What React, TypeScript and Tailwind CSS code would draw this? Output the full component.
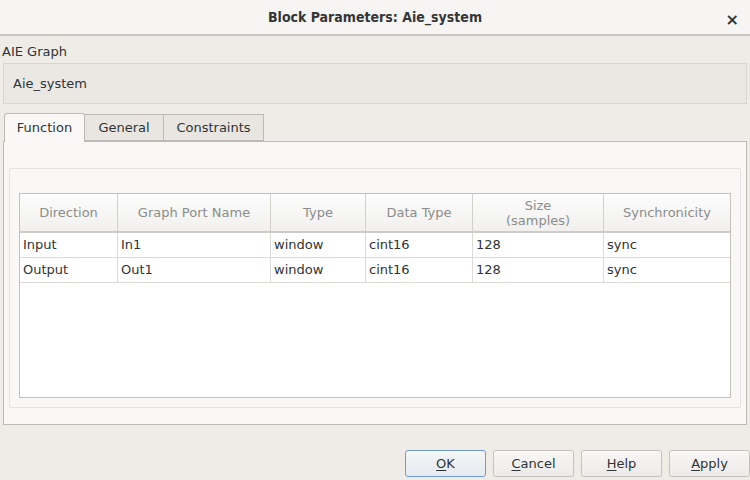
const cols = [
  { label: "Direction", w: "w-[98px]" },
  { label: "Graph Port Name", w: "w-[153px]" },
  { label: "Type", w: "w-[95px]" },
  { label: "Data Type", w: "w-[107px]" },
  { label: "Size\n(samples)", w: "w-[131px]" },
  { label: "Synchronicity", w: "flex-1" },
];

const rows = [
  ["Input", "In1", "window", "cint16", "128", "sync"],
  ["Output", "Out1", "window", "cint16", "128", "sync"],
];

function Btn({ k, rest, primary }: { k: string; rest: string; primary?: boolean }) {
  return (
    <button
      className={
        "w-[81px] h-[27px] rounded-[3px] border text-[13px] text-[#2e3436] " +
        (primary
          ? "border-[#6f9bd0] bg-gradient-to-b from-[#f4f6f8] to-[#e6eaee]"
          : "border-[#c6c2bd] bg-gradient-to-b from-[#f8f7f6] to-[#edebe8]")
      }
    >
      <span className="underline underline-offset-2">{k}</span>
      {rest}
    </button>
  );
}

export default function App() {
  return (
    <div className="w-[750px] h-[480px] bg-[#efece8] overflow-hidden flex flex-col font-['DejaVu_Sans',sans-serif] text-[13px] text-[#2e3436]">
      <div className="h-[36px] shrink-0 bg-[#f6f5f4] border-b-2 border-[#c9c6c2] flex items-center relative">
        <div className="flex-1 text-center font-['DejaVu_Sans_Condensed','DejaVu_Sans',sans-serif] font-bold text-[14px] text-[#353535]">
          Block Parameters: Aie_system
        </div>
        <span className="absolute right-[11px] top-[8px] text-[16px] font-bold">×</span>
      </div>

      <div className="px-[2px] pt-[8px] leading-[16px]">AIE Graph</div>
      <div className="mx-[3px] mt-[3px] h-[41px] shrink-0 border border-[#d9d5d0] bg-[#ebe8e4] flex items-center px-[9px]">
        Aie_system
      </div>

      <div className="mt-[8px] mx-[3px] flex flex-col">
        <div className="flex pl-[1px] h-[29px] items-end">
          <div className="h-[29px] w-[81px] border border-b-0 border-[#bdb9b4] bg-[#faf8f6] rounded-t-[3px] flex items-center justify-center relative top-[1px] z-10">
            Function
          </div>
          <div className="h-[27px] w-[79px] border border-l-0 border-[#bdb9b4] bg-[#e9e6e2] flex items-center justify-center">
            General
          </div>
          <div className="h-[27px] w-[100px] border border-l-0 border-[#bdb9b4] bg-[#e9e6e2] flex items-center justify-center">
            Constraints
          </div>
        </div>
        <div className="h-[284px] border border-[#bdb9b4] bg-[#faf8f6] px-[5px] pt-[26px]">
          <div className="h-[240px] border border-[#e6e2dd] rounded-[2px] px-[9px] pt-[24px]">
            <div className="h-[205px] border border-[#c4c0bb] bg-white flex flex-col">
              <div className="flex h-[39px] border-b-2 border-[#cfccc8] bg-gradient-to-b from-[#fdfdfd] to-[#f1f0ee]">
                {cols.map((c, i) => (
                  <div
                    key={i}
                    className={
                      c.w +
                      " flex items-center justify-center text-center text-[#8b8d8b] whitespace-pre-line leading-[15px] " +
                      (i < cols.length - 1 ? "border-r border-[#d3d0cc]" : "")
                    }
                  >
                    {c.label}
                  </div>
                ))}
              </div>
              {rows.map((r, ri) => (
                <div key={ri} className="flex h-[25px] border-b border-[#dedbd7]">
                  {r.map((v, i) => (
                    <div
                      key={i}
                      className={
                        cols[i].w +
                        " flex items-center px-[3px] pb-[1px] " +
                        (i < r.length - 1 ? "border-r border-[#dedbd7]" : "")
                      }
                    >
                      {v}
                    </div>
                  ))}
                </div>
              ))}
            </div>
          </div>
        </div>
      </div>

      <div className="flex justify-end gap-[7px] mt-[25px]">
        <Btn k="O" rest="K" primary />
        <Btn k="C" rest="ancel" />
        <Btn k="H" rest="elp" />
        <Btn k="A" rest="pply" />
      </div>
    </div>
  );
}
